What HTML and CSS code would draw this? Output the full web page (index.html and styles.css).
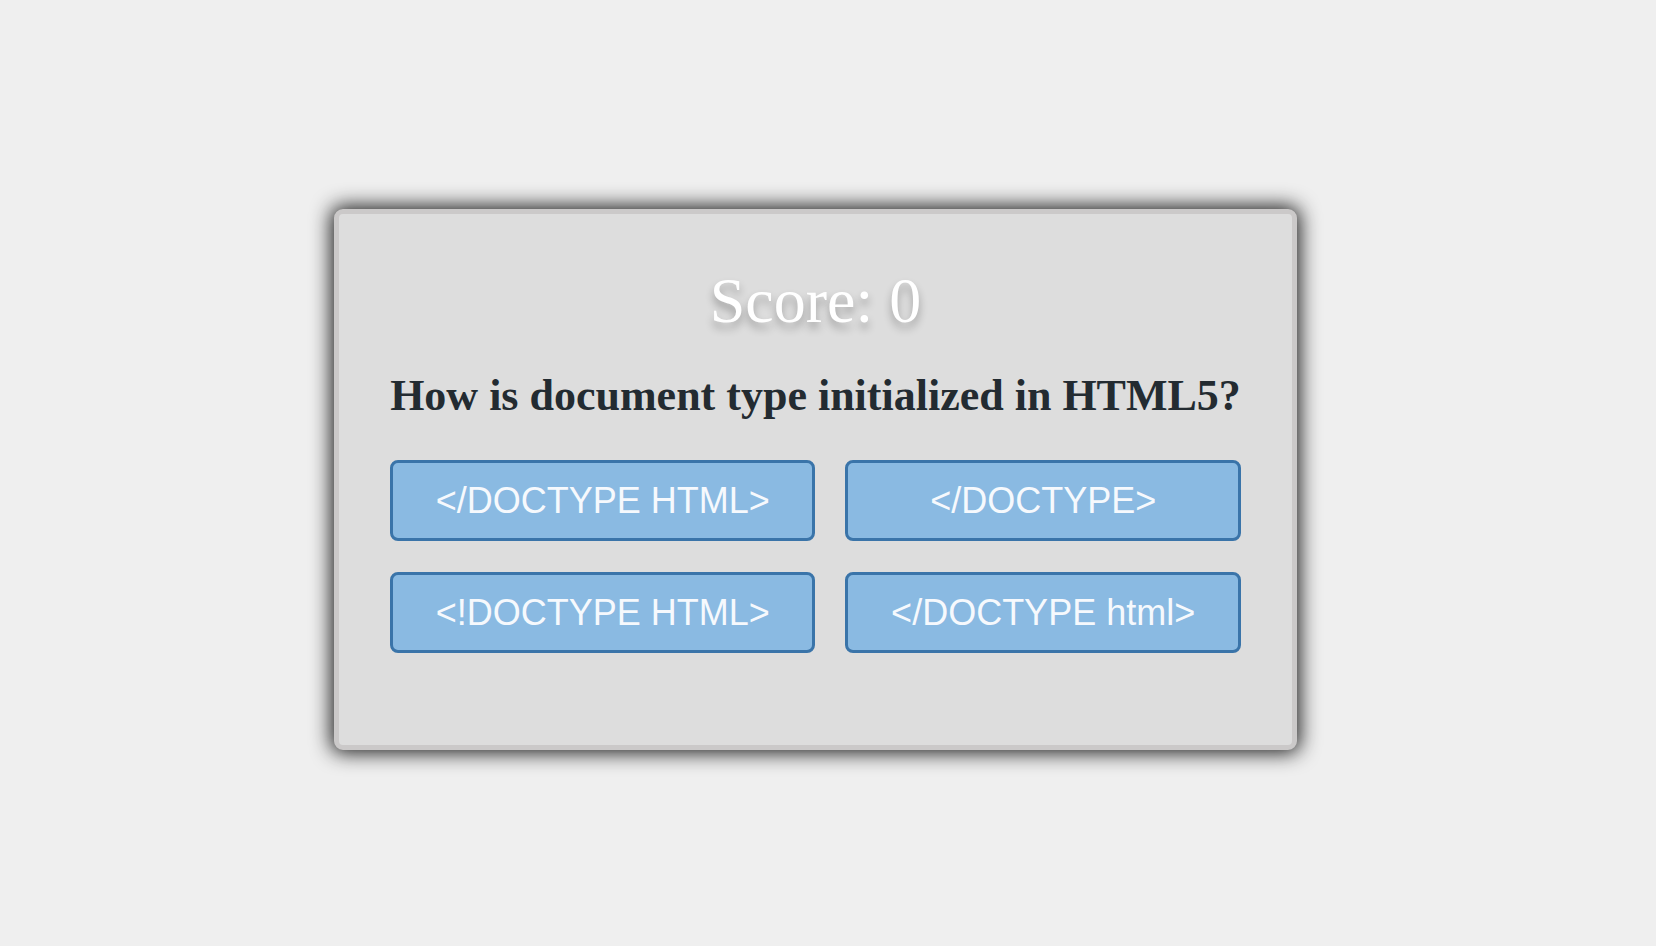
FILE: index.html
```html
<!DOCTYPE html>
<html lang="en">
<head>
<meta charset="utf-8">
<title>Quiz</title>
<link rel="stylesheet" href="styles.css">
</head>
<body>
<main class="stage">
  <section class="card">
    <h1 class="score">Score: 0</h1>
    <h2 class="question">How is document type initialized in HTML5?</h2>
    <div class="answers">
      <button class="answer">&lt;/DOCTYPE HTML&gt;</button>
      <button class="answer">&lt;/DOCTYPE&gt;</button>
      <button class="answer">&lt;!DOCTYPE HTML&gt;</button>
      <button class="answer">&lt;/DOCTYPE html&gt;</button>
    </div>
  </section>
</main>
</body>
</html>
```

FILE: styles.css
```css
html, body {
  margin: 0;
  padding: 0;
  height: 100%;
}

body {
  background: #efefef;
  font-family: "Liberation Serif", "Times New Roman", serif;
}

.stage {
  height: 100%;
  display: flex;
  justify-content: center;
  align-items: center;
  padding: 13px 25px 0 0;
  box-sizing: border-box;
}

.card {
  background: #dddddd;
  border: 5px solid #cbc9c9;
  border-radius: 9px;
  box-shadow: 0 0 20px 3px rgba(0, 0, 0, 0.88);
  padding: 50px 51px 92px 51px;
  display: flex;
  flex-direction: column;
  align-items: stretch;
}

.score {
  margin: 0;
  font-size: 64px;
  line-height: 74px;
  font-weight: normal;
  color: #ffffff;
  text-align: center;
  text-shadow: 0 6px 9px rgba(0, 0, 0, 0.3);
}

.question {
  margin: 33px 0 39px 0;
  font-size: 44px;
  line-height: 50px;
  font-weight: bold;
  color: #232b31;
  text-align: center;
  white-space: nowrap;
}

.answers {
  display: grid;
  grid-template-columns: auto auto;
  column-gap: 30px;
  row-gap: 31px;
}

.answer {
  font-family: "Liberation Sans", Arial, sans-serif;
  font-size: 36px;
  line-height: 41px;
  color: #f6f9fd;
  background: #8abae2;
  border: 3px solid #3a74a9;
  border-radius: 8px;
  padding: 17px 40px;
  margin: 0;
  text-align: center;
  white-space: nowrap;
}
```
